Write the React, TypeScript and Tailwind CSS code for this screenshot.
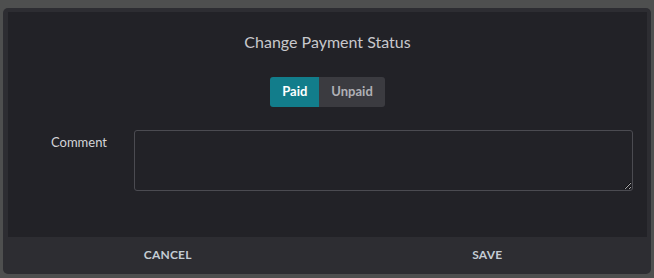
import { useState } from 'react';

export default function App() {
  const [status, setStatus] = useState<'paid' | 'unpaid'>('paid');
  const [comment, setComment] = useState('');

  return (
    <div className="w-[654px] h-[278px] bg-[#4e4f4f] pt-[8px] pl-[3px] pr-[3px] font-['Lato','Liberation_Sans',sans-serif] overflow-hidden">
      <div className="h-[266px] rounded-[5px] bg-[#2d2d32] pt-[4px] pl-[5px] pr-[4px] flex flex-col">
        {/* Body */}
        <div className="h-[225px] bg-[#222227] pt-[20px] flex flex-col">
          <h2 className="text-center text-[16px] leading-[19px] text-[#c8c8cc]">Change Payment Status</h2>

          <div className="mt-[26px] flex justify-center">
            <button
              onClick={() => setStatus('paid')}
              className={`h-[30px] px-3 text-[13px] font-bold rounded-l-[3px] ${
                status === 'paid' ? 'bg-[#127d8b] text-white' : 'bg-[#3b3b40] text-[#b0b0b5]'
              }`}
            >
              Paid
            </button>
            <button
              onClick={() => setStatus('unpaid')}
              className={`h-[30px] px-3 text-[13px] font-bold rounded-r-[3px] ${
                status === 'unpaid' ? 'bg-[#127d8b] text-white' : 'bg-[#3b3b40] text-[#b0b0b5]'
              }`}
            >
              Unpaid
            </button>
          </div>

          <div className="mt-[23px] flex pl-[43px] pr-[14px]">
            <label className="w-[83px] pt-[4px] text-[13px] leading-[16px] text-[#d4d4d8]">Comment</label>
            <textarea
              value={comment}
              onChange={(e) => setComment(e.target.value)}
              className="flex-1 h-[61px] rounded-[3px] border border-[#4b4b51] bg-transparent text-[13px] text-[#d4d4d8] outline-none px-2 py-1"
            />
          </div>
        </div>

        {/* Footer */}
        <div className="h-[37px] flex">
          <button className="flex-1 pb-[1px] text-[12px] font-bold text-[#c4ccd4] tracking-[0.2px]">CANCEL</button>
          <button className="flex-1 pb-[1px] text-[12px] font-bold text-[#c4ccd4] tracking-[0.2px]">SAVE</button>
        </div>
      </div>
    </div>
  );
}
